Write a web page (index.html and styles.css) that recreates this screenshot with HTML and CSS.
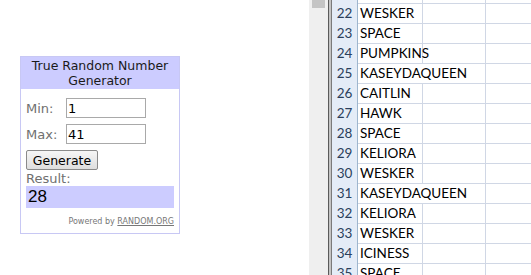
FILE: index.html
```html
<!DOCTYPE html>
<html>
	<head>
		<title>Random Pick</title>
		<link rel="stylesheet" href="styles.css">
	</head>

	<body>
		<div class="page">
			<div class="left">
				<div class="rng">
					<div class="rng-head">True Random Number<br>Generator</div>
					<div class="rng-body">
						<div class="field">
							<span class="label">Min:</span>
							<input class="num" type="text" value="1">
						</div>
						<div class="field">
							<span class="label">Max:</span>
							<input class="num" type="text" value="41">
						</div>
						<button class="gen">Generate</button>
						<div class="label result-label">Result:</div>
						<div class="result">28</div>
						<div class="powered">Powered by <u>RANDOM.ORG</u></div>
					</div>
				</div>
			</div>

			<div class="strip"><div class="thumb"></div></div>
			<div class="divider"></div>

			<div class="sheet-wrap">
				<div class="sheet" id="sheet"></div>
			</div>
		</div>

		<script>
			// rows visible in the scrolled sheet, 21 is cut off at top
			var names = [
				"", "WESKER", "SPACE", "PUMPKINS", "KASEYDAQUEEN", "CAITLIN", "HAWK",
				"SPACE", "KELIORA", "WESKER", "KASEYDAQUEEN", "KELIORA", "WESKER",
				"ICINESS", "SPACE"
			];

			var output = '';
			for (var i = 0; i < names.length; i++) {
				var wide = names[i].length > 8;
				output += "<div class='row" + (wide ? " wide" : "") + "'>";
				output += "<div class='hdr'>" + (21 + i) + "</div>";
				output += "<div class='cell b'>" + names[i] + "</div>";
				output += "<div class='cell c'></div>";
				output += "<div class='cell d'></div>";
				output += "</div>";
			}
			document.getElementById("sheet").innerHTML = output;
		</script>
	</body>
</html>
```

FILE: styles.css
```css
body {
	margin: 0;
	background-color: white;
}

.page {
	display: flex;
	height: 275px;
	overflow: hidden;
}

.left {
	width: 309px;
	flex: none;
	padding: 56px 0 0 20px;
	box-sizing: border-box;
}

/* random.org widget */

.rng {
	width: 160px;
	box-sizing: border-box;
	border: 1px solid #c8c8f4;
	font-family: "DejaVu Sans", sans-serif;
}

.rng-head {
	background-color: #ccccff;
	height: 31px;
	padding-top: 1px;
	text-align: center;
	font-size: 12.5px;
	line-height: 15px;
	color: #1a1a1a;
}

.rng-body {
	display: flex;
	flex-direction: column;
	align-items: flex-start;
	padding: 9px 5px 7px 5px;
}

.field {
	display: flex;
	align-items: center;
	margin-bottom: 6px;
}

.label {
	color: #707070;
	font-size: 13px;
	width: 40px;
}

.num {
	width: 80px;
	height: 20px;
	box-sizing: border-box;
	border: 1px solid #a9a9a9;
	padding: 0 1px;
	font-family: "DejaVu Sans", sans-serif;
	font-size: 13px;
	color: black;
	margin: 0;
}

.gen {
	width: 72px;
	height: 20px;
	margin: 0;
	padding: 0;
	border: 1px solid #8a8a8a;
	border-radius: 2px;
	background: linear-gradient(#f6f6f6, #dedede);
	font-family: "DejaVu Sans", sans-serif;
	font-size: 12.5px;
	color: black;
}

.result-label {
	margin-top: 1px;
	line-height: 15px;
}

.result {
	align-self: stretch;
	background-color: #ccccff;
	height: 22px;
	line-height: 22px;
	padding-left: 2px;
	font-family: "Liberation Sans", sans-serif;
	font-size: 17px;
	color: black;
}

.powered {
	align-self: flex-end;
	margin-top: 9px;
	font-size: 8px;
	color: #777;
}

/* spreadsheet side */

.strip {
	width: 19px;
	flex: none;
	background-color: #efefef;
	padding-left: 3px;
	box-sizing: border-box;
}

.thumb {
	width: 13px;
	height: 8px;
	background-color: #c4c4c4;
}

.divider {
	width: 2px;
	flex: none;
	border-left: 1px solid #5a5a5a;
	border-right: 1px solid #7a7a7a;
	background-color: #c4c4c4;
}

.sheet-wrap {
	flex: 1;
	overflow: hidden;
}

.sheet {
	margin-top: -17px;
	font-family: Lato, sans-serif;
	font-size: 13.5px;
}

.row {
	display: grid;
	grid-template-columns: 26px 65px 63px 1fr;
	height: 20px;
}

.hdr {
	background-color: #e4ecf7;
	border-right: 1px solid #9eb6ce;
	border-bottom: 1px solid #9eb6ce;
	text-align: center;
	line-height: 20px;
	color: #2b3f5c;
}

.cell {
	border-right: 1px solid #d0d7e5;
	border-bottom: 1px solid #d0d7e5;
	line-height: 20px;
	white-space: nowrap;
	color: black;
}

.cell.b {
	padding-left: 2px;
}

.row.wide .cell.b {
	border-right-color: transparent;
	overflow: visible;
}

.cell.d {
	border-right: none;
}
```
